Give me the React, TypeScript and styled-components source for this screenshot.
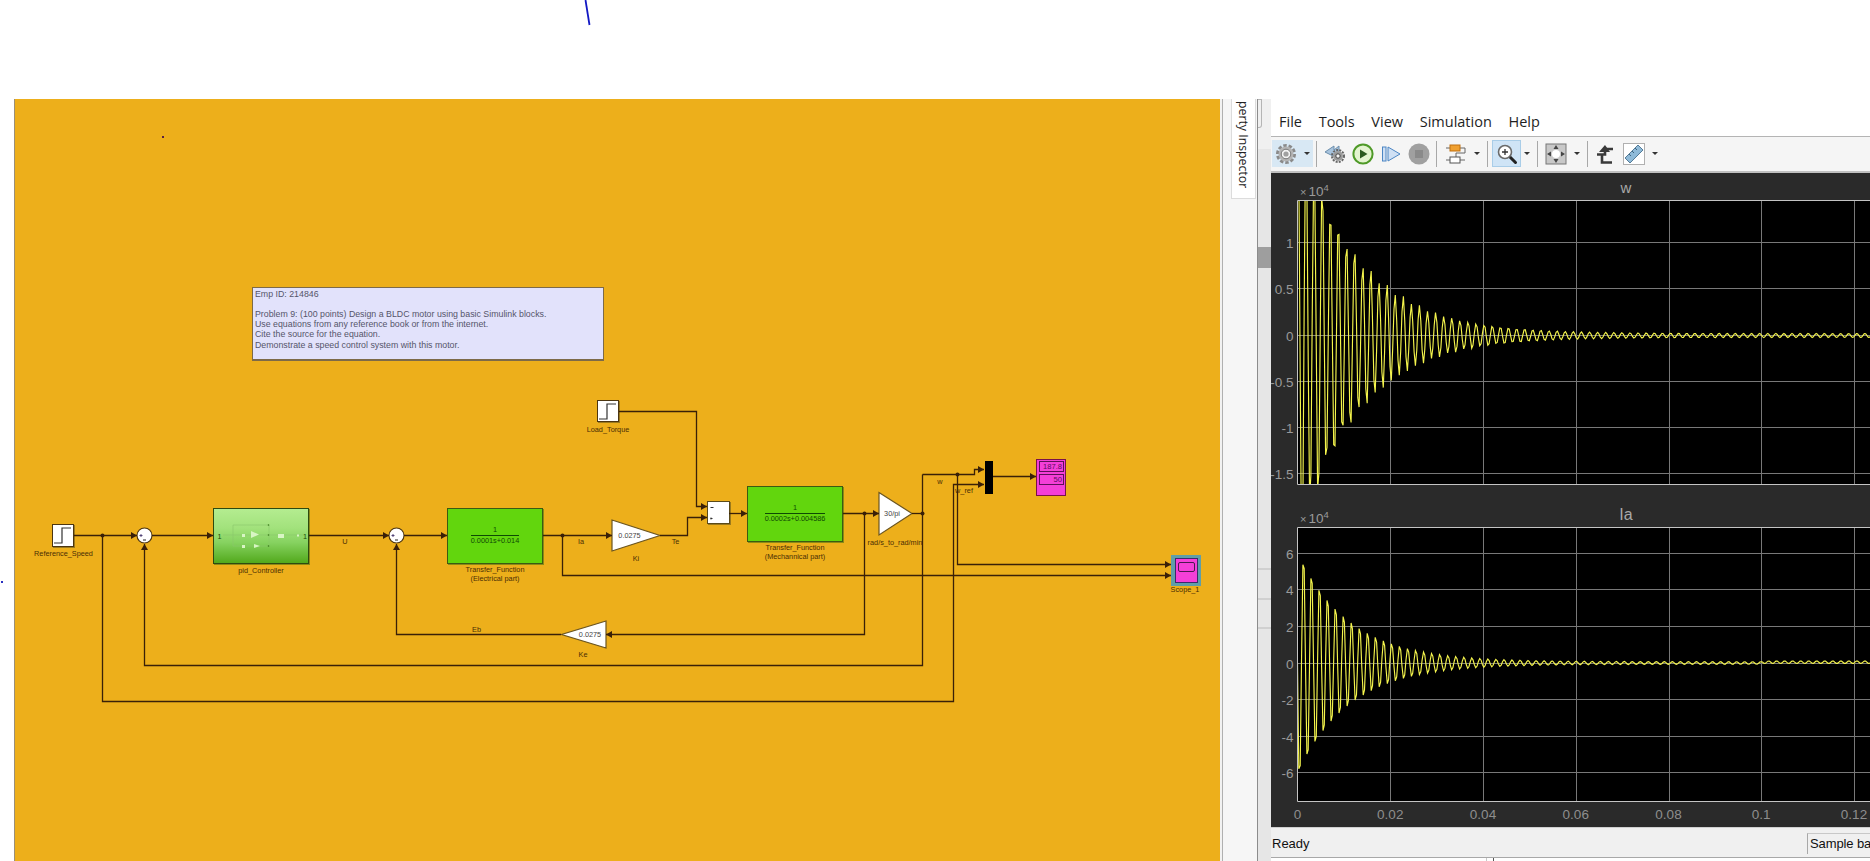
import React from 'react'
import styled, { createGlobalStyle } from 'styled-components'

const GlobalStyle = createGlobalStyle`
  html, body {
    margin: 0;
    background: #fff;
    overflow: hidden;
  }
`

// diagram coordinates are page pixels, the canvas starts at (15, 99)
const CANVAS_X = 15
const CANVAS_Y = 99

type Box = { $x: number; $y: number; $w: number; $h: number }
type Point = [number, number]

const Page = styled.div`
  position: relative;
  width: 1870px;
  height: 861px;
  overflow: hidden;
  font-family: 'Liberation Sans', Arial, sans-serif;
`

const TopBlank = styled.div`
  height: 99px;
`

const Workspace = styled.div`
  display: flex;
  height: 762px;
`

const Gutter = styled.div`
  width: 14px;
  flex: none;
`

const Canvas = styled.div`
  position: relative;
  width: 1205px;
  flex: none;
  background: #edaf1b;
  border-left: 1px solid #9a8f78;
`

const StrayTick = styled.svg`
  position: absolute;
  left: 584px;
  top: 0;
`

const StrayDot = styled.div`
  position: absolute;
  left: 147px;
  top: 37px;
  width: 2px;
  height: 2px;
  background: #5a2040;
`

const StrayBlueDot = styled.div`
  position: absolute;
  left: 1px;
  top: 581px;
  width: 2px;
  height: 2px;
  background: #2a30c0;
`

const BelowTicks = styled.div`
  position: absolute;
  left: 1486px;
  top: 858px;
  width: 6px;
  height: 3px;
  border-left: 1px solid #c8c8c8;
  border-right: 1px solid #555;
`

const Block = styled.div<Box>`
  position: absolute;
  left: ${p => p.$x - CANVAS_X}px;
  top: ${p => p.$y - CANVAS_Y}px;
  width: ${p => p.$w}px;
  height: ${p => p.$h}px;
  box-sizing: border-box;
`

const NoteBox = styled(Block)`
  background: #e2e2fb;
  border: 1px solid #7d6a48;
  border-bottom-width: 2px;
  padding: 1px 2px;
  color: #55556a;
  font-size: 8.8px;
  line-height: 10.2px;
  white-space: pre;
`

const StepBlock = styled(Block)`
  background: #fff;
  border: 1px solid #4c3510;
  box-shadow: 1px 1px 0 #9c7a1c;
  display: flex;
  align-items: center;
  justify-content: center;
`

const TransferBlock = styled(Block)`
  background: #62d60d;
  border: 1px solid #3c5a12;
  box-shadow: 1px 1px 0 #8d8a16;
  display: flex;
  flex-direction: column;
  align-items: center;
  justify-content: center;
  color: #0f4a05;
  font-size: 7.3px;
  line-height: 8.5px;
`

const Numerator = styled.div<{ $w: number }>`
  width: ${p => p.$w}px;
  text-align: center;
  border-bottom: 1.5px solid #0d4a03;
  padding-bottom: 1px;
  margin-bottom: 1px;
`

const PidBlock = styled(Block)`
  background: linear-gradient(#b4ec90 0%, #a2e27c 35%, #86d260 62%, #52a91c 100%);
  border: 1px solid #2e4a10;
  box-shadow: 1px 1px 0 #8d8a16;
`

const SumBox = styled(Block)`
  background: #fff;
  border: 1px solid #5a4a1a;
  box-shadow: 1px 1px 0 #9c7a1c;
`

const MuxBar = styled(Block)`
  background: #000;
`

const DisplayBlock = styled(Block)`
  background: #f43fd8;
  border: 1px solid #7a1248;
  padding: 1px 1px 0 1.5px;
  display: flex;
  flex-direction: column;
  gap: 2px;
`

const DisplayCell = styled.div`
  height: 11px;
  box-sizing: border-box;
  border: 1px solid #5c1058;
  color: #5a0c60;
  font-size: 7.6px;
  line-height: 9px;
  text-align: right;
  padding-right: 1px;
`

const ScopeBlock = styled(Block)`
  background: #5f9ea8;
  padding: 3px 3px 3px 4px;
`

const ScopeFace = styled.div`
  height: 25px;
  box-sizing: border-box;
  background: #f43fd8;
  border: 1px solid #3a2a6a;
  padding: 3px 2px;
`

const ScopeScreen = styled.div`
  height: 10px;
  box-sizing: border-box;
  border: 1px solid #4a1a50;
  border-radius: 2px;
`

const Label = styled.div<{ $x: number; $y: number }>`
  position: absolute;
  left: ${p => p.$x - CANVAS_X}px;
  top: ${p => p.$y - CANVAS_Y}px;
  transform: translate(-50%, -50%);
  color: #4a2e05;
  font-size: 7.3px;
  line-height: 9px;
  text-align: center;
  white-space: pre;
`

const DiagramSvg = styled.svg`
  position: absolute;
  left: 0;
  top: 0;
`

const SidePanel = styled.div`
  width: 51px;
  flex: none;
  display: flex;
  background: #f2f2f2;
  padding-left: 2px;
  box-sizing: border-box;
`

const InspectorRail = styled.div`
  width: 36px;
  flex: none;
  box-sizing: border-box;
  background: #f6f6f6;
  border-left: 1px solid #b0b0b0;
  border-right: 1px solid #8c8c8c;
  padding-left: 8px;
`

const InspectorTab = styled.div`
  width: 25px;
  height: 100px;
  box-sizing: border-box;
  background: #fff;
  border: 1px solid #dcdcdc;
  border-top: none;
  padding-bottom: 10px;
  display: flex;
  justify-content: flex-end;
  align-items: center;
  writing-mode: vertical-rl;
  font-family: 'Open Sans', sans-serif;
  font-size: 12.3px;
  line-height: 23px;
  color: #222;
  white-space: nowrap;
`

const ScrollStrip = styled.div`
  flex: 1;
  background: linear-gradient(#f0f0f0 0, #f0f0f0 50px, #e6e6e6 50px);
`

const StripKnob = styled.div`
  width: 4px;
  height: 29px;
  box-sizing: border-box;
  border: 1px solid #b5b5b5;
  border-left: none;
  border-radius: 0 0 3px 0;
`

const StripThumb = styled.div`
  height: 21px;
  margin-top: 119px;
  background: #9e9e9e;
`

const StripRule = styled.div<{ $top: number }>`
  height: 2px;
  margin-top: ${p => p.$top}px;
  background: #d0d0d0;
`

const ScopeWindow = styled.div`
  width: 599px;
  height: 746px;
  flex: none;
  margin-top: 13px;
  display: flex;
  flex-direction: column;
  background: #f0f0f0;
`

const MenuBar = styled.div`
  height: 24px;
  flex: none;
  display: flex;
  gap: 16.7px;
  padding: 0 0 0 8px;
  background: #fff;
  border-bottom: 1px solid #b4b4b4;
  font-family: 'Open Sans', sans-serif;
  font-size: 14.5px;
  line-height: 20px;
  color: #1e1e1e;
`

const Toolbar = styled.div`
  height: 36px;
  flex: none;
  box-sizing: border-box;
  display: flex;
  align-items: center;
  padding: 0 0 1px 1px;
  background: #f5f5f5;
  border-bottom: 2px solid #c0c0c0;
`

const ToolGroup = styled.div`
  display: flex;
  height: 27px;
  background: #d8e8f4;
`

const ToolSlot = styled.div<{ $w: number; $on?: boolean }>`
  width: ${p => p.$w}px;
  height: 27px;
  flex: none;
  display: flex;
  align-items: center;
  justify-content: center;
  box-sizing: border-box;
  ${p => (p.$on ? 'background: #cfe4f6; border: 1px solid #a9cde8;' : '')}
`

const ToolSep = styled.div<{ $l: number; $r: number }>`
  width: 1px;
  height: 26px;
  flex: none;
  margin: 0 ${p => p.$r}px 0 ${p => p.$l}px;
  background: #a8a8a8;
`

const DropArrow = styled.div`
  width: 0;
  height: 0;
  border-left: 3px solid transparent;
  border-right: 3px solid transparent;
  border-top: 3px solid #333;
`

const PlotStack = styled.div`
  height: 654px;
  flex: none;
  background: #2a2a2a;
`

const PlotSvg = styled.svg`
  display: block;
`

const StatusBar = styled.div`
  height: 31px;
  flex: none;
  box-sizing: border-box;
  display: flex;
  align-items: center;
  justify-content: space-between;
  background: #f0f0f0;
  border-top: 1px solid #cfcfcf;
  border-bottom: 1px solid #a8a8a8;
  padding: 2px 0 0 1px;
  font-size: 13px;
  color: #111;
`

const SampleField = styled.div`
  width: 63px;
  height: 21px;
  box-sizing: border-box;
  border-left: 1px solid #a8a8a8;
  border-top: 1px solid #c8c8c8;
  padding-left: 2px;
  line-height: 19px;
  letter-spacing: -0.1px;
  white-space: nowrap;
`

const WIRE = '#3a2008'

const WIRES: { points: Point[]; arrow?: boolean }[] = [
  { points: [[74, 535.5], [137, 535.5]], arrow: true },
  { points: [[152, 535.5], [213, 535.5]], arrow: true },
  { points: [[309, 535.5], [389, 535.5]], arrow: true },
  { points: [[404, 535.5], [447, 535.5]], arrow: true },
  { points: [[543, 535.5], [612, 535.5]], arrow: true },
  { points: [[562.5, 535.5], [562.5, 575.5], [1171, 575.5]], arrow: true },
  { points: [[660, 535.5], [687.5, 535.5], [687.5, 517.5], [707, 517.5]], arrow: true },
  { points: [[619, 411.5], [696.5, 411.5], [696.5, 506.5], [707, 506.5]], arrow: true },
  { points: [[729, 513.5], [747, 513.5]], arrow: true },
  { points: [[843, 513.5], [879, 513.5]], arrow: true },
  { points: [[864.5, 513.5], [864.5, 634.5], [606, 634.5]], arrow: true },
  { points: [[912, 513.5], [922.5, 513.5]] },
  { points: [[922.5, 474.5], [922.5, 665.5], [144.5, 665.5], [144.5, 544]], arrow: true },
  { points: [[922.5, 474.5], [974.5, 474.5], [974.5, 469.5], [984, 469.5]], arrow: true },
  { points: [[957.5, 474.5], [957.5, 564.5], [1171, 564.5]], arrow: true },
  { points: [[102.5, 535.5], [102.5, 701.5], [953.5, 701.5], [953.5, 484.5], [984, 484.5]], arrow: true },
  { points: [[561, 634.5], [396.5, 634.5], [396.5, 544]], arrow: true },
  { points: [[993, 476.5], [1036, 476.5]], arrow: true },
]

const JUNCTIONS: Point[] = [
  [102.5, 535.5],
  [562.5, 535.5],
  [864.5, 513.5],
  [922.5, 513.5],
  [957.5, 474.5],
]

const arrowHead = ([fx, fy]: Point, [tx, ty]: Point) => {
  const dx = Math.sign(tx - fx)
  const dy = Math.sign(ty - fy)
  return [
    [tx, ty],
    [tx - dx * 6 - dy * 3.5, ty - dy * 6 - dx * 3.5],
    [tx - dx * 6 + dy * 3.5, ty - dy * 6 + dx * 3.5],
  ]
    .map(p => p.join(','))
    .join(' ')
}

const Wires: React.FC = () => (
  <>
    {WIRES.map(({ points, arrow }) => (
      <g key={points.join()}>
        <polyline points={points.map(p => p.join(',')).join(' ')} fill="none" stroke={WIRE} strokeWidth={1.3} />
        {arrow && <polygon points={arrowHead(points[points.length - 2], points[points.length - 1])} fill={WIRE} />}
      </g>
    ))}
    {JUNCTIONS.map(([x, y]) => (
      <circle key={x} cx={x} cy={y} r={2} fill={WIRE} />
    ))}
  </>
)

const Gain: React.FC<{ points: string; textX: number; y: number; value: string }> = ({ points, textX, y, value }) => (
  <g>
    <polygon points={points} fill="#fff" stroke="#6b5520" strokeWidth={1.2} />
    <text x={textX} y={y + 2.5} fontSize={7.3} textAnchor="middle" fill="#444" fontFamily="'Liberation Sans', sans-serif">
      {value}
    </text>
  </g>
)

const SumCircle: React.FC<{ x: number }> = ({ x }) => (
  <g>
    <circle cx={x} cy={535.5} r={7.5} fill="#fff" stroke="#4c3510" strokeWidth={1.1} />
    <path d={`M${x - 5} 535.5h3M${x - 3.5} 534v3`} stroke="#4a3a70" strokeWidth={0.9} />
    <path d={`M${x - 1.5} 540h3`} stroke="#222" strokeWidth={1} />
  </g>
)

const PidGlyph: React.FC = () => (
  <svg width={94} height={55} viewBox="213 508 94 55">
    <g stroke="#8cc86c" strokeWidth={0.6} fill="none">
      <path d="M232 524h36v21h-36zM222 534h80" />
    </g>
    <g fill="#d8f5c4">
      <polygon points="250,530 258,533.5 250,537" />
      <polygon points="253,543 259,545 253,547" />
      <rect x={277} y={533} width={6} height={4} />
      <rect x={241} y={533} width={3} height={3} />
      <rect x={241} y={544} width={3} height={3} />
      <rect x={296} y={533.5} width={2} height={2} />
    </g>
    <g fill="#3a7a1a">
      <circle cx={267.5} cy={524} r={0.8} />
      <circle cx={267.5} cy={534} r={0.8} />
      <circle cx={267.5} cy={545} r={0.8} />
    </g>
    <g fontSize={7.3} fontFamily="'Liberation Sans', sans-serif" fill="#1e4a08">
      <text x={216.5} y={538}>1</text>
      <text x={302} y={538}>1</text>
    </g>
  </svg>
)

const StepGlyph: React.FC = () => (
  <svg width={20} height={21} viewBox="0 0 20 21">
    <path d="M1 18H9V3H18" fill="none" stroke="#333" strokeWidth={1.2} />
  </svg>
)

const Diagram: React.FC = () => (
  <Canvas>
    <StrayDot />
    <NoteBox $x={252} $y={286.5} $w={352} $h={74}>
      {`Emp ID: 214846

Problem 9: (100 points) Design a BLDC motor using basic Simulink blocks.
Use equations from any reference book or from the internet.
Cite the source for the equation.
Demonstrate a speed control system with this motor.`}
    </NoteBox>

    <StepBlock $x={52} $y={524} $w={22} $h={23}>
      <StepGlyph />
    </StepBlock>
    <Label $x={63.5} $y={553}>Reference_Speed</Label>

    <StepBlock $x={597} $y={400} $w={22} $h={22}>
      <StepGlyph />
    </StepBlock>
    <Label $x={608} $y={428.5}>Load_Torque</Label>

    <PidBlock $x={213} $y={507.5} $w={96} $h={56}>
      <PidGlyph />
    </PidBlock>
    <Label $x={261} $y={569.5}>pid_Controller</Label>

    <TransferBlock $x={447} $y={507.5} $w={96} $h={56}>
      <Numerator $w={48}>1</Numerator>
      <div>0.0001s+0.014</div>
    </TransferBlock>
    <Label $x={495} $y={574}>{'Transfer_Function\n(Electrical part)'}</Label>

    <SumBox $x={706.5} $y={500.5} $w={23} $h={23}>
      <svg width={20} height={21} viewBox="0 0 20 21">
        <path d="M2.500 5.500h3M2.500 16.500h2M3 15.500v2" stroke="#333" strokeWidth={1} />
      </svg>
    </SumBox>

    <TransferBlock $x={747} $y={485.5} $w={96} $h={56}>
      <Numerator $w={60}>1</Numerator>
      <div>0.0002s+0.004586</div>
    </TransferBlock>
    <Label $x={795} $y={552}>{'Transfer_Function\n(Mechannical part)'}</Label>

    <MuxBar $x={984.5} $y={460.5} $w={8.5} $h={33} />

    <DisplayBlock $x={1036} $y={458.5} $w={30} $h={37.5}>
      <DisplayCell>187.8</DisplayCell>
      <DisplayCell>50</DisplayCell>
    </DisplayBlock>

    <ScopeBlock $x={1171} $y={554.5} $w={29.5} $h={31}>
      <ScopeFace>
        <ScopeScreen />
      </ScopeFace>
    </ScopeBlock>
    <Label $x={1185} $y={588.5}>Scope_1</Label>

    <DiagramSvg width={1205} height={762} viewBox={`${CANVAS_X} ${CANVAS_Y} 1205 762`}>
      <Gain points="612,520 660,535.5 612,551" textX={629.5} y={535.5} value="0.0275" />
      <Gain points="606,621 561.5,634.5 606,648" textX={590} y={634.5} value="0.0275" />
      <Gain points="879,492.5 912,513.5 879,535" textX={892} y={513} value="30/pi" />
      <SumCircle x={144.5} />
      <SumCircle x={396.5} />
      <Wires />
    </DiagramSvg>

    <Label $x={345} $y={541}>U</Label>
    <Label $x={581} $y={541}>Ia</Label>
    <Label $x={675.5} $y={541}>Te</Label>
    <Label $x={636} $y={557.5}>Ki</Label>
    <Label $x={583} $y={653.5}>Ke</Label>
    <Label $x={476.5} $y={629}>Eb</Label>
    <Label $x={895} $y={542}>rad/s_to_rad/min</Label>
    <Label $x={940} $y={481}>w</Label>
    <Label $x={964} $y={490}>w_ref</Label>
  </Canvas>
)

const GearIcon: React.FC = () => (
  <svg width={22} height={22} viewBox="0 0 22 22">
    <circle cx={11} cy={11} r={8.5} fill="none" stroke="#8a8a8a" strokeWidth={3} strokeDasharray="3.4 1.9" />
    <circle cx={11} cy={11} r={7.5} fill="#b4b4b4" />
    <circle cx={11} cy={11} r={4.8} fill="#f2f2f2" stroke="#777" />
    <circle cx={11} cy={11} r={2.6} fill="#a0a0a0" />
  </svg>
)

const RewindIcon: React.FC = () => (
  <svg width={24} height={22} viewBox="0 0 24 22">
    <path d="M1 9 10 3v4l5-4v7L9 13 1 9z" fill="#a8c4de" stroke="#6c8eac" />
    <circle cx={14} cy={13} r={6} fill="none" stroke="#666" strokeWidth={2} strokeDasharray="2 1.2" />
    <circle cx={14} cy={13} r={5} fill="#9c9c9c" />
    <circle cx={14} cy={13} r={2.2} fill="#f4f4f4" stroke="#444" />
  </svg>
)

const PlayIcon: React.FC = () => (
  <svg width={22} height={22} viewBox="0 0 22 22">
    <circle cx={11} cy={11} r={9.6} fill="#e4f4d0" stroke="#4f9a28" strokeWidth={2} />
    <polygon points="8,6.500 15.500,11 8,15.500" fill="#2c5a20" />
  </svg>
)

const StepIcon: React.FC = () => (
  <svg width={20} height={20} viewBox="0 0 20 20">
    <rect x={1.5} y={3} width={3.5} height={14} fill="#cfe0f4" stroke="#4c86c4" />
    <polygon points="7,3 19,10 7,17" fill="#cfe0f4" stroke="#4c86c4" />
  </svg>
)

const StopIcon: React.FC = () => (
  <svg width={22} height={22} viewBox="0 0 22 22">
    <circle cx={11} cy={11} r={10.5} fill="#a0a0a0" />
    <rect x={7} y={7} width={8} height={8} fill="#8a8a8a" />
  </svg>
)

const BlocksIcon: React.FC = () => (
  <svg width={22} height={22} viewBox="0 0 22 22">
    <path d="M1 5h4M15 5h5v5h-9v7M1 17h4M15 17h5" fill="none" stroke="#666" />
    <rect x={5} y={2} width={10} height={6} fill="#f0a030" stroke="#c07010" />
    <rect x={5} y={14} width={10} height={6} fill="#fff" stroke="#555" />
  </svg>
)

const MagnifierIcon: React.FC = () => (
  <svg width={22} height={22} viewBox="0 0 22 22">
    <path d="M13 13l6.500 6.500" stroke="#222" strokeWidth={3} strokeLinecap="round" />
    <circle cx={9} cy={9} r={6.5} fill="#fff" stroke="#6a6a6a" strokeWidth={1.6} />
    <path d="M6 9h6M9 6v6" stroke="#333" strokeWidth={1.3} />
  </svg>
)

const AutoscaleIcon: React.FC = () => (
  <svg width={22} height={22} viewBox="0 0 22 22">
    <rect x={1} y={1} width={20} height={20} fill="#c8c8c8" stroke="#777" />
    <circle cx={11} cy={11} r={4} fill="#fff" />
    <path d="M11 2 8.500 6h5zM11 20 8.500 16h5zM2 11l4-2.500v5zM20 11l-4-2.500v5z" fill="#444" />
  </svg>
)

const CursorIcon: React.FC = () => (
  <svg width={20} height={22} viewBox="0 0 20 22">
    <path d="M4 9 10 2l5 7z" fill="#3a3a3a" />
    <path d="M2 11.500H10V6H18M7 11.500V19.500H17" fill="none" stroke="#3a3a3a" strokeWidth={2.6} />
  </svg>
)

const RulerIcon: React.FC = () => (
  <svg width={22} height={22} viewBox="0 0 22 22">
    <rect x={0.5} y={0.5} width={21} height={21} fill="#fff" stroke="#b0b0b0" />
    <path d="M2 15 15 2l5 5L7 20z" fill="#8fbad8" stroke="#557c98" />
    <path d="M6 11l2 2M9 8l2 2M12 5l2 2" stroke="#3c6480" />
  </svg>
)

const ScopeToolbar: React.FC = () => (
  <Toolbar>
    <ToolGroup>
      <ToolSlot $w={28}><GearIcon /></ToolSlot>
      <ToolSlot $w={13}><DropArrow /></ToolSlot>
    </ToolGroup>
    <ToolSep $l={3} $r={4} />
    <ToolSlot $w={30}><RewindIcon /></ToolSlot>
    <ToolSlot $w={24}><PlayIcon /></ToolSlot>
    <ToolSlot $w={32}><StepIcon /></ToolSlot>
    <ToolSlot $w={24}><StopIcon /></ToolSlot>
    <ToolSep $l={5} $r={5} />
    <ToolSlot $w={28}><BlocksIcon /></ToolSlot>
    <ToolSlot $w={14}><DropArrow /></ToolSlot>
    <ToolSep $l={3} $r={4} />
    <ToolSlot $w={29} $on><MagnifierIcon /></ToolSlot>
    <ToolSlot $w={12}><DropArrow /></ToolSlot>
    <ToolSep $l={4} $r={4} />
    <ToolSlot $w={28}><AutoscaleIcon /></ToolSlot>
    <ToolSlot $w={14}><DropArrow /></ToolSlot>
    <ToolSep $l={3} $r={3} />
    <ToolSlot $w={28}><CursorIcon /></ToolSlot>
    <ToolSlot $w={30}><RulerIcon /></ToolSlot>
    <ToolSlot $w={12}><DropArrow /></ToolSlot>
  </Toolbar>
)

const AXIS_LEFT = 1297.5
const X_STEP = 92.75
const X_TICKS = ['0', '0.02', '0.04', '0.06', '0.08', '0.1', '0.12']
const TITLE_X = 1626

type PlotConfig = {
  id: string
  viewTop: number
  axisTop: number
  axisBottom: number
  zero: number
  title: string
  titleY: number
  titleSize: number
  exponentY: number
  yTicks: { label: string; y: number }[]
  wave: (x: number) => number
  xLabels?: boolean
}

const PLOT_W = 599
const PLOT_H = 327
const SAMPLE_STEP = 1.34

const wavePath = (zero: number, wave: (x: number) => number) => {
  const pts: string[] = []
  for (let x = 0; x < PLOT_W; x += SAMPLE_STEP) {
    pts.push(`${(AXIS_LEFT + x).toFixed(1)},${(zero - wave(x)).toFixed(1)}`)
  }
  return `M${pts.join('L')}`
}

const PLOTS: PlotConfig[] = [
  {
    id: 'w',
    viewTop: 173,
    axisTop: 200.5,
    axisBottom: 484.5,
    zero: 335.5,
    title: 'w',
    titleY: 193,
    titleSize: 15,
    exponentY: 196,
    yTicks: [
      { label: '1', y: 242.5 },
      { label: '0.5', y: 288.5 },
      { label: '0', y: 335.5 },
      { label: '-0.5', y: 381.5 },
      { label: '-1', y: 427.5 },
      { label: '-1.5', y: 473.5 },
    ],
    wave: x => (228 * Math.exp(-x / 57) * (1 + 0.05 * Math.sin(x * 0.37)) + 2) * Math.sin((2 * Math.PI * (x - 6.5)) / 8.1),
  },
  {
    id: 'ia',
    viewTop: 500,
    axisTop: 527.5,
    axisBottom: 801.5,
    zero: 663,
    title: 'Ia',
    titleY: 520,
    titleSize: 16,
    exponentY: 523,
    yTicks: [
      { label: '6', y: 553.5 },
      { label: '4', y: 589.5 },
      { label: '2', y: 626.5 },
      { label: '0', y: 663 },
      { label: '-2', y: 699.5 },
      { label: '-4', y: 736.5 },
      { label: '-6', y: 772.5 },
    ],
    wave: x => (x > 464 ? 0.8 : 0) - (124 * Math.exp(-x / 50) + 1.3) * Math.sin((2 * Math.PI * x) / 8.02),
    xLabels: true,
  },
]

const Plot: React.FC<{ plot: PlotConfig }> = ({ plot }) => {
  const { id, viewTop, axisTop, axisBottom, zero, title, titleY, titleSize, exponentY, yTicks, wave, xLabels } = plot
  const gridX = X_TICKS.map((_, i) => AXIS_LEFT + i * X_STEP)
  return (
    <PlotSvg width={PLOT_W} height={PLOT_H} viewBox={`1271 ${viewTop} ${PLOT_W} ${PLOT_H}`} fontFamily="'Liberation Sans', sans-serif">
      <clipPath id={`clip-${id}`}>
        <rect x={AXIS_LEFT} y={axisTop} width={PLOT_W} height={axisBottom - axisTop} />
      </clipPath>
      <rect x={AXIS_LEFT} y={axisTop} width={PLOT_W} height={axisBottom - axisTop} fill="#000" />
      <g stroke="#787878" strokeWidth={1}>
        {gridX.slice(1).map(x => (
          <line key={x} x1={Math.round(x) + 0.5} x2={Math.round(x) + 0.5} y1={axisTop} y2={axisBottom} />
        ))}
        {yTicks.map(t => (
          <line key={t.label} x1={AXIS_LEFT} x2={1870} y1={Math.floor(t.y) + 0.5} y2={Math.floor(t.y) + 0.5} />
        ))}
      </g>
      <path clipPath={`url(#clip-${id})`} d={wavePath(zero, wave)} fill="none" stroke="#f4f44c" strokeWidth={1.15} />
      <path d={`M1870 ${axisTop}H${AXIS_LEFT}V${axisBottom}H1870`} fill="none" stroke="#c4c4c4" strokeWidth={1} />
      <text x={TITLE_X} y={titleY} fontSize={titleSize} textAnchor="middle" fill="#a8a8a8">
        {title}
      </text>
      <text x={1300} y={exponentY} fontSize={13.5} fill="#9a9a9a">
        <tspan fontSize={11}>×</tspan>
        <tspan dx={2}>10</tspan>
        <tspan dy={-5} fontSize={9.5}>4</tspan>
      </text>
      {yTicks.map(t => (
        <text key={t.label} x={1293.5} y={t.y + 5.5} fontSize={13.5} textAnchor="end" fill="#9a9a9a">
          {t.label}
        </text>
      ))}
      {xLabels &&
        X_TICKS.map((label, i) => (
          <text key={label} x={gridX[i]} y={819} fontSize={13.5} textAnchor="middle" fill="#8e8e8e">
            {label}
          </text>
        ))}
    </PlotSvg>
  )
}

const App: React.FC = () => (
  <Page>
    <GlobalStyle />
    <TopBlank />
    <Workspace>
      <Gutter />
      <Diagram />
      <SidePanel>
        <InspectorRail>
          <InspectorTab>perty Inspector</InspectorTab>
        </InspectorRail>
        <ScrollStrip>
          <StripKnob />
          <StripThumb />
          <StripRule $top={300} />
          <StripRule $top={28} />
          <StripRule $top={27} />
        </ScrollStrip>
      </SidePanel>
      <ScopeWindow>
        <MenuBar>
          <span>File</span>
          <span>Tools</span>
          <span>View</span>
          <span>Simulation</span>
          <span>Help</span>
        </MenuBar>
        <ScopeToolbar />
        <PlotStack>
          {PLOTS.map(p => (
            <Plot key={p.id} plot={p} />
          ))}
        </PlotStack>
        <StatusBar>
          <span>Ready</span>
          <SampleField>Sample ba</SampleField>
        </StatusBar>
      </ScopeWindow>
    </Workspace>
    <StrayTick width={8} height={27} viewBox="0 0 8 27">
      <path d="M1.500 0 5.500 25" stroke="#1218c4" strokeWidth={1.8} />
    </StrayTick>
    <StrayBlueDot />
    <BelowTicks />
  </Page>
)

export default App
